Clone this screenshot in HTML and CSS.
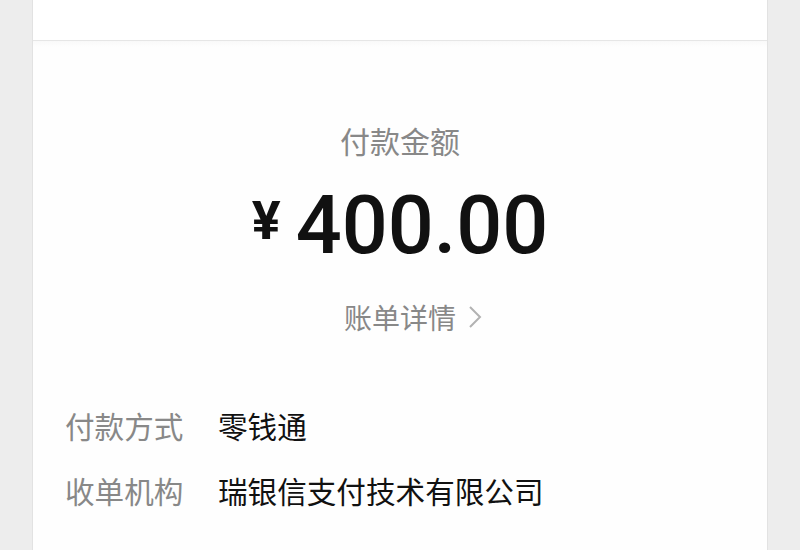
FILE: index.html
```html
<!DOCTYPE html>
<html lang="zh-CN">
<head>
    <meta charset="UTF-8">
    <meta name="viewport" content="width=device-width, initial-scale=1.0">
    <title>账单详情</title>
    <link rel="stylesheet" href="styles.css">
</head>
<body>
    <div class="card">
        <div class="card-top"></div>
        <div class="card-main">
            <div class="pay-title">付款金额</div>
            <div class="amount">
                <span class="currency">¥</span>
                <span class="value">400.00</span>
            </div>
            <div class="bill-link">
                <span class="bill-text">账单详情</span>
                <svg class="chevron" width="14" height="24" viewBox="0 0 14 24">
                    <polyline points="2,2 12,12 2,22" fill="none" stroke="#b2b2b2" stroke-width="2"/>
                </svg>
            </div>
            <div class="info">
                <div class="info-row">
                    <span class="info-label">付款方式</span>
                    <span class="info-value">零钱通</span>
                </div>
                <div class="info-row">
                    <span class="info-label">收单机构</span>
                    <span class="info-value">瑞银信支付技术有限公司</span>
                </div>
            </div>
        </div>
    </div>
</body>
</html>
```

FILE: styles.css
```css
body {
    margin: 0;
    background-color: #ededed;
    font-family: "Noto Sans CJK SC", "Noto Sans", sans-serif;
    height: 550px;
    overflow: hidden;
}

.card {
    margin: 0 32px;
    height: 550px;
    background-color: #fefefe;
    border-left: 1px solid #e2e2e2;
    border-right: 1px solid #e2e2e2;
}

.card-top {
    height: 40px;
    background-color: #fff;
    border-bottom: 1px solid #e6e6e6;
}

.card-main {
    padding-top: 79px;
    background: linear-gradient(#f9f9f9, #fefefe 6px);
}

.pay-title {
    text-align: center;
    font-size: 30px;
    line-height: 40px;
    color: #888;
}

.amount {
    display: flex;
    justify-content: center;
    align-items: flex-start;
    margin-top: 21px;
    color: #111;
}

.currency {
    font-family: Roboto, "Noto Sans", sans-serif;
    font-weight: bold;
    font-size: 54px;
    line-height: 60px;
    margin-top: 10px;
    margin-right: 15px;
}

.value {
    font-family: Roboto, sans-serif;
    font-weight: 500;
    font-size: 81px;
    line-height: 90px;
}

.bill-link {
    display: grid;
    grid-template-columns: 1fr auto 1fr;
    align-items: center;
    margin-top: 26px;
    font-size: 28px;
    line-height: 40px;
    color: #888;
}

.bill-text {
    grid-column: 2;
}

.chevron {
    margin-left: 12px;
}

.info {
    margin-top: 69px;
    padding-left: 32px;
}

.info-row {
    display: flex;
    font-size: 29.6px;
    line-height: 40px;
    margin-bottom: 25px;
}

.info-label {
    width: 153px;
    color: #888;
}

.info-value {
    color: #111;
}
```
